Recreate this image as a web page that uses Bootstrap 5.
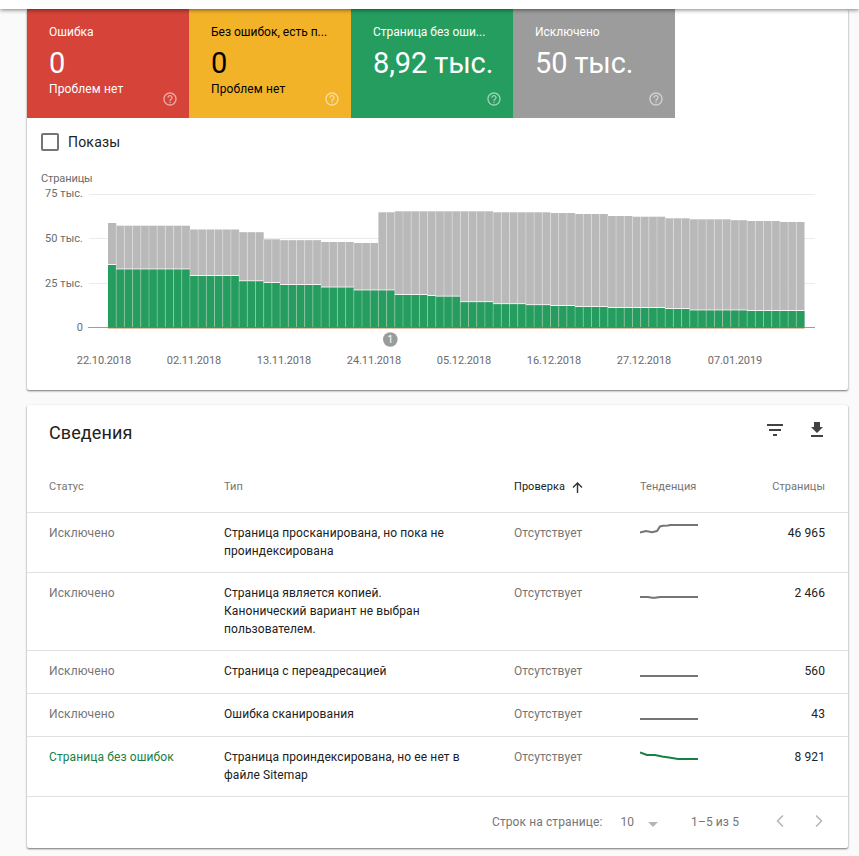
<!DOCTYPE html>
<html lang="ru">
<head>
<meta charset="utf-8">
<meta name="viewport" content="width=device-width, initial-scale=1">
<title>Покрытие</title>
<link href="https://cdn.jsdelivr.net/npm/bootstrap@5.3.0/dist/css/bootstrap.min.css" rel="stylesheet">
<style>
body{font-family:Roboto,"Liberation Sans",sans-serif;background:#fafafa;color:#212121;font-size:12px;line-height:18px;height:856px;overflow:hidden}
.topbar{height:9px;background:#fff;box-shadow:0 1px 4px rgba(0,0,0,.5);z-index:2}
.page{padding:0 11px 0 27px}
.panel{background:#fff;border-radius:2px;box-shadow:0 1px 2px rgba(0,0,0,.38),0 1px 2px rgba(0,0,0,.22)}
.panel-chart{height:381px}
.panel-details{height:443px;margin-top:15px}
.tile{width:162px;height:109px;padding:14px 19px 0 22px;color:#fff;letter-spacing:0}
.tile-error{background:#d64338}
.tile-warn{background:#f2b329;color:#000}
.tile-ok{background:#249d5e}
.tile-excl{background:#9c9c9c}
.tile-num{font-size:29px;line-height:36px;padding-top:4px;height:39px;letter-spacing:-.1px}
.tile-note{font-size:12px;letter-spacing:.12px}
.help{right:11px;bottom:11px;opacity:.55;color:#fff}
.box{width:18px;height:18px;border:2px solid #757575;border-radius:2px}
.shows{padding:15px 0 0 14px;font-size:14px;letter-spacing:.2px;gap:9px}
.graph{display:block}
.graph text{font-size:11px;fill:#6b6b6b;letter-spacing:.05px}
.graph .dates text{letter-spacing:-.1px}
.graph .ylab{letter-spacing:-.1px}
.title{font-size:18px;line-height:24px;letter-spacing:.1px}
.head{height:55px;padding:0 24px 0 22px}
.tools{margin-top:-6px;gap:27px}
.tbl{table-layout:fixed;--bs-table-bg:transparent;font-size:12px}
.tbl>:not(caption)>*>*{padding:11px 0 0;border-bottom:1px solid #e0e0e0;color:#212121;line-height:18px;letter-spacing:.1px}
.tbl>thead>tr>th{height:52px;padding-top:18px;vertical-align:top;font-size:11px;font-weight:400;color:#757575;letter-spacing:.05px}
.tbl>thead>tr>th.sorted{color:#212121}
.tbl>tbody>tr>.gr{color:#757575}
.tbl>tbody>tr>.ok{color:#188046}
.tbl>:not(caption)>*>*:first-child{padding-left:22px}
.tbl>:not(caption)>*>*:last-child{padding-right:23px;text-align:right}
.r1>td{height:43px}.r2>td{height:60px}.r3>td{height:78px}
.trend{display:block;margin-top:-1px}
.pager{height:51px;padding-right:25px;color:#757575;letter-spacing:.1px}
.pg-n{margin-left:18px}
.pg-caret{margin:5px 0 0 14px}
.pg-range{margin-left:33px}
.pg-prev{margin:-3px 0 0 37px}
.pg-next{margin:-3px 0 0 31px}
</style>
<script src="https://cdn.jsdelivr.net/npm/bootstrap@5.3.0/dist/js/bootstrap.bundle.min.js"></script>
</head>
<body>
<svg class="d-none"><symbol id="q" viewBox="0 0 24 24"><path fill="currentColor" d="M11 18h2v-2h-2v2zm1-16C6.480 2 2 6.480 2 12s4.480 10 10 10 10-4.480 10-10S17.520 2 12 2zm0 18c-4.410 0-8-3.590-8-8s3.590-8 8-8 8 3.590 8 8-3.590 8-8 8zm0-14c-2.210 0-4 1.790-4 4h2c0-1.100.9-2 2-2s2 .9 2 2c0 2-3 1.750-3 5h2c0-2.250 3-2.500 3-5 0-2.210-1.790-4-4-4z"/></symbol></svg>
<header class="topbar position-relative"></header>
<main class="page">
  <section class="panel panel-chart">
    <div class="d-flex">
      <div class="tile tile-error position-relative"><div class="text-nowrap">Ошибка</div><div class="tile-num">0</div><div class="tile-note">Проблем нет</div><svg class="help position-absolute" width="16" height="16"><use href="#q"/></svg></div>
      <div class="tile tile-warn position-relative"><div class="text-nowrap">Без ошибок, есть п...</div><div class="tile-num">0</div><div class="tile-note">Проблем нет</div><svg class="help position-absolute" width="16" height="16"><use href="#q"/></svg></div>
      <div class="tile tile-ok position-relative"><div class="text-nowrap">Страница без оши...</div><div class="tile-num text-nowrap">8,92 тыс.</div><svg class="help position-absolute" width="16" height="16"><use href="#q"/></svg></div>
      <div class="tile tile-excl position-relative"><div class="text-nowrap">Исключено</div><div class="tile-num text-nowrap">50 тыс.</div><svg class="help position-absolute" width="16" height="16"><use href="#q"/></svg></div>
    </div>
    <div class="shows d-flex align-items-center"><span class="box"></span><span>Показы</span></div>
    <svg class="graph" width="821" height="220" viewBox="27 151 821 220">
      <g stroke="#ebebeb"><path d="M89 194.500H815M89 238.500H815M89 283.500H815"/><path d="M88 327.500H815" stroke="#9e9e9e"/></g>
      <g id="bars"></g>
      <text x="41" y="182" class="ylab">Страницы</text>
      <g text-anchor="end"><text x="83" y="197">75 тыс.</text><text x="83" y="242">50 тыс.</text><text x="83" y="287">25 тыс.</text><text x="83" y="331">0</text></g>
      <circle cx="390.300" cy="339.500" r="7.300" fill="#9b9b9b"/><text x="390.300" y="343" text-anchor="middle" style="fill:#fff;font-size:10px">1</text>
      <g class="dates" text-anchor="middle"><text x="104" y="364">22.10.2018</text><text x="194" y="364">02.11.2018</text><text x="284" y="364">13.11.2018</text><text x="374" y="364">24.11.2018</text><text x="464" y="364">05.12.2018</text><text x="554" y="364">16.12.2018</text><text x="644" y="364">27.12.2018</text><text x="735" y="364">07.01.2019</text></g>
    </svg>
  </section>
  <section class="panel panel-details">
    <div class="head d-flex align-items-center justify-content-between">
      <div class="title">Сведения</div>
      <div class="tools d-flex align-items-center">
        <svg width="16" height="12"><path fill="#424242" d="M0 0h16v2H0zM2 5h12v2H2zM6 10h4v2H6z"/></svg>
        <svg width="14" height="16" viewBox="3 0 14 16"><path fill="#424242" d="M7 0h6v5h3L10 11 4 5h3zM4 13h12v2H4z"/></svg>
      </div>
    </div>
    <table class="table tbl mb-0">
      <colgroup><col style="width:197px"><col style="width:290px"><col style="width:126px"><col style="width:110px"><col></colgroup>
      <thead><tr><th>Статус</th><th>Тип</th><th class="sorted">Проверка <svg width="11" height="11" viewBox="0 0 11 11" class="ms-1"><path d="M5.500 11V1M1 5.500l4.500-4.500L10 5.500" fill="none" stroke="#333" stroke-width="1.400"/></svg></th><th>Тенденция</th><th>Страницы</th></tr></thead>
      <tbody>
        <tr class="r2"><td class="gr">Исключено</td><td>Страница просканирована, но пока не<br>проиндексирована</td><td class="gr">Отсутствует</td><td><svg class="trend" width="58" height="18"><path d="M0 9.500 2 9 6 8 12 9.200 17 8 20 3.500 23 2.800 28 2.500 30 2H58" fill="none" stroke="#757575" stroke-width="2"/></svg></td><td>46 965</td></tr>
        <tr class="r3"><td class="gr">Исключено</td><td>Страница является копией.<br>Канонический вариант не выбран<br>пользователем.</td><td class="gr">Отсутствует</td><td><svg class="trend" width="58" height="18"><path d="M0 14H8L12 14.800H15L20 14H58" fill="none" stroke="#757575" stroke-width="2"/></svg></td><td>2 466</td></tr>
        <tr class="r1"><td class="gr">Исключено</td><td>Страница с переадресацией</td><td class="gr">Отсутствует</td><td><svg class="trend" width="58" height="18"><path d="M0 15H58" fill="none" stroke="#757575" stroke-width="2"/></svg></td><td>560</td></tr>
        <tr class="r1"><td class="gr">Исключено</td><td>Ошибка сканирования</td><td class="gr">Отсутствует</td><td><svg class="trend" width="58" height="18"><path d="M0 15H58" fill="none" stroke="#757575" stroke-width="2"/></svg></td><td>43</td></tr>
        <tr class="r2"><td class="ok">Страница без ошибок</td><td>Страница проиндексирована, но ее нет в<br>файле Sitemap</td><td class="gr">Отсутствует</td><td><svg class="trend" width="58" height="18"><path d="M0 5.500 7 8H15L22 9.500 29 10.500 38 12H58" fill="none" stroke="#188046" stroke-width="2"/></svg></td><td>8 921</td></tr>
      </tbody>
    </table>
    <div class="pager d-flex align-items-center justify-content-end">
      <span>Строк на странице:</span>
      <span class="pg-n">10</span>
      <svg class="pg-caret" width="10" height="5"><path d="M0 0h10L5 5z" fill="#b5b5b5"/></svg>
      <span class="pg-range">1–5 из 5</span>
      <svg class="pg-prev" width="8" height="12" viewBox="0 0 8 12"><path d="M7 .5 1.500 6 7 11.500" fill="none" stroke="#b5b5b5" stroke-width="1.500"/></svg>
      <svg class="pg-next" width="8" height="12" viewBox="0 0 8 12"><path d="M1 .5 6.500 6 1 11.500" fill="none" stroke="#b5b5b5" stroke-width="1.500"/></svg>
    </div>
  </section>
</main>
<script>
/* [number of days, y] runs for the stacked daily bars */
const total=[[1,223],[9,225.700],[6,229.500],[3,232.200],[2,239.300],[5,240.200],[4,242],[3,243],[2,212.300],[12,211.300],[7,212.300],[3,213],[4,214],[3,216],[4,216.700],[3,218.300],[5,219.300],[2,220.200],[4,221],[3,222]];
const valid=[[1,265],[9,269.500],[6,276],[3,281.300],[2,283],[5,285],[4,287.600],[5,290.500],[4,295],[1,296],[3,296.700],[4,302.200],[4,304.200],[3,305.200],[3,306],[4,307],[7,308],[3,309],[7,310.500],[7,311]];
const x0=108,w=696.500/85,base=327;
const days=a=>a.flatMap(([n,y])=>Array(n).fill(y));
const t=days(total),v=days(valid);let s='';
for(let i=0;i<85;i++){const x=x0+i*w;
 s+=`<rect x="${x}" y="${t[i]}" width="${w}" height="${base-t[i]}" fill="#b9b9b9"/><rect x="${x}" y="${v[i]-1}" width="${w}" height="1" fill="#f4f4f4"/><rect x="${x}" y="${v[i]}" width="${w}" height="${base-v[i]}" fill="#249d5e"/>`;
 if(i)s+=`<path d="M${x} ${Math.max(t[i],t[i-1])}V327" stroke="#fff" stroke-opacity=".33" stroke-width=".9"/>`;}
s+=`<path d="M108 327.500H804.500" stroke="#c75b31"/><path d="M108 328.500H804.500" stroke="#e3c3a3"/>`;
document.getElementById('bars').innerHTML=s;
</script>
</body>
</html>
